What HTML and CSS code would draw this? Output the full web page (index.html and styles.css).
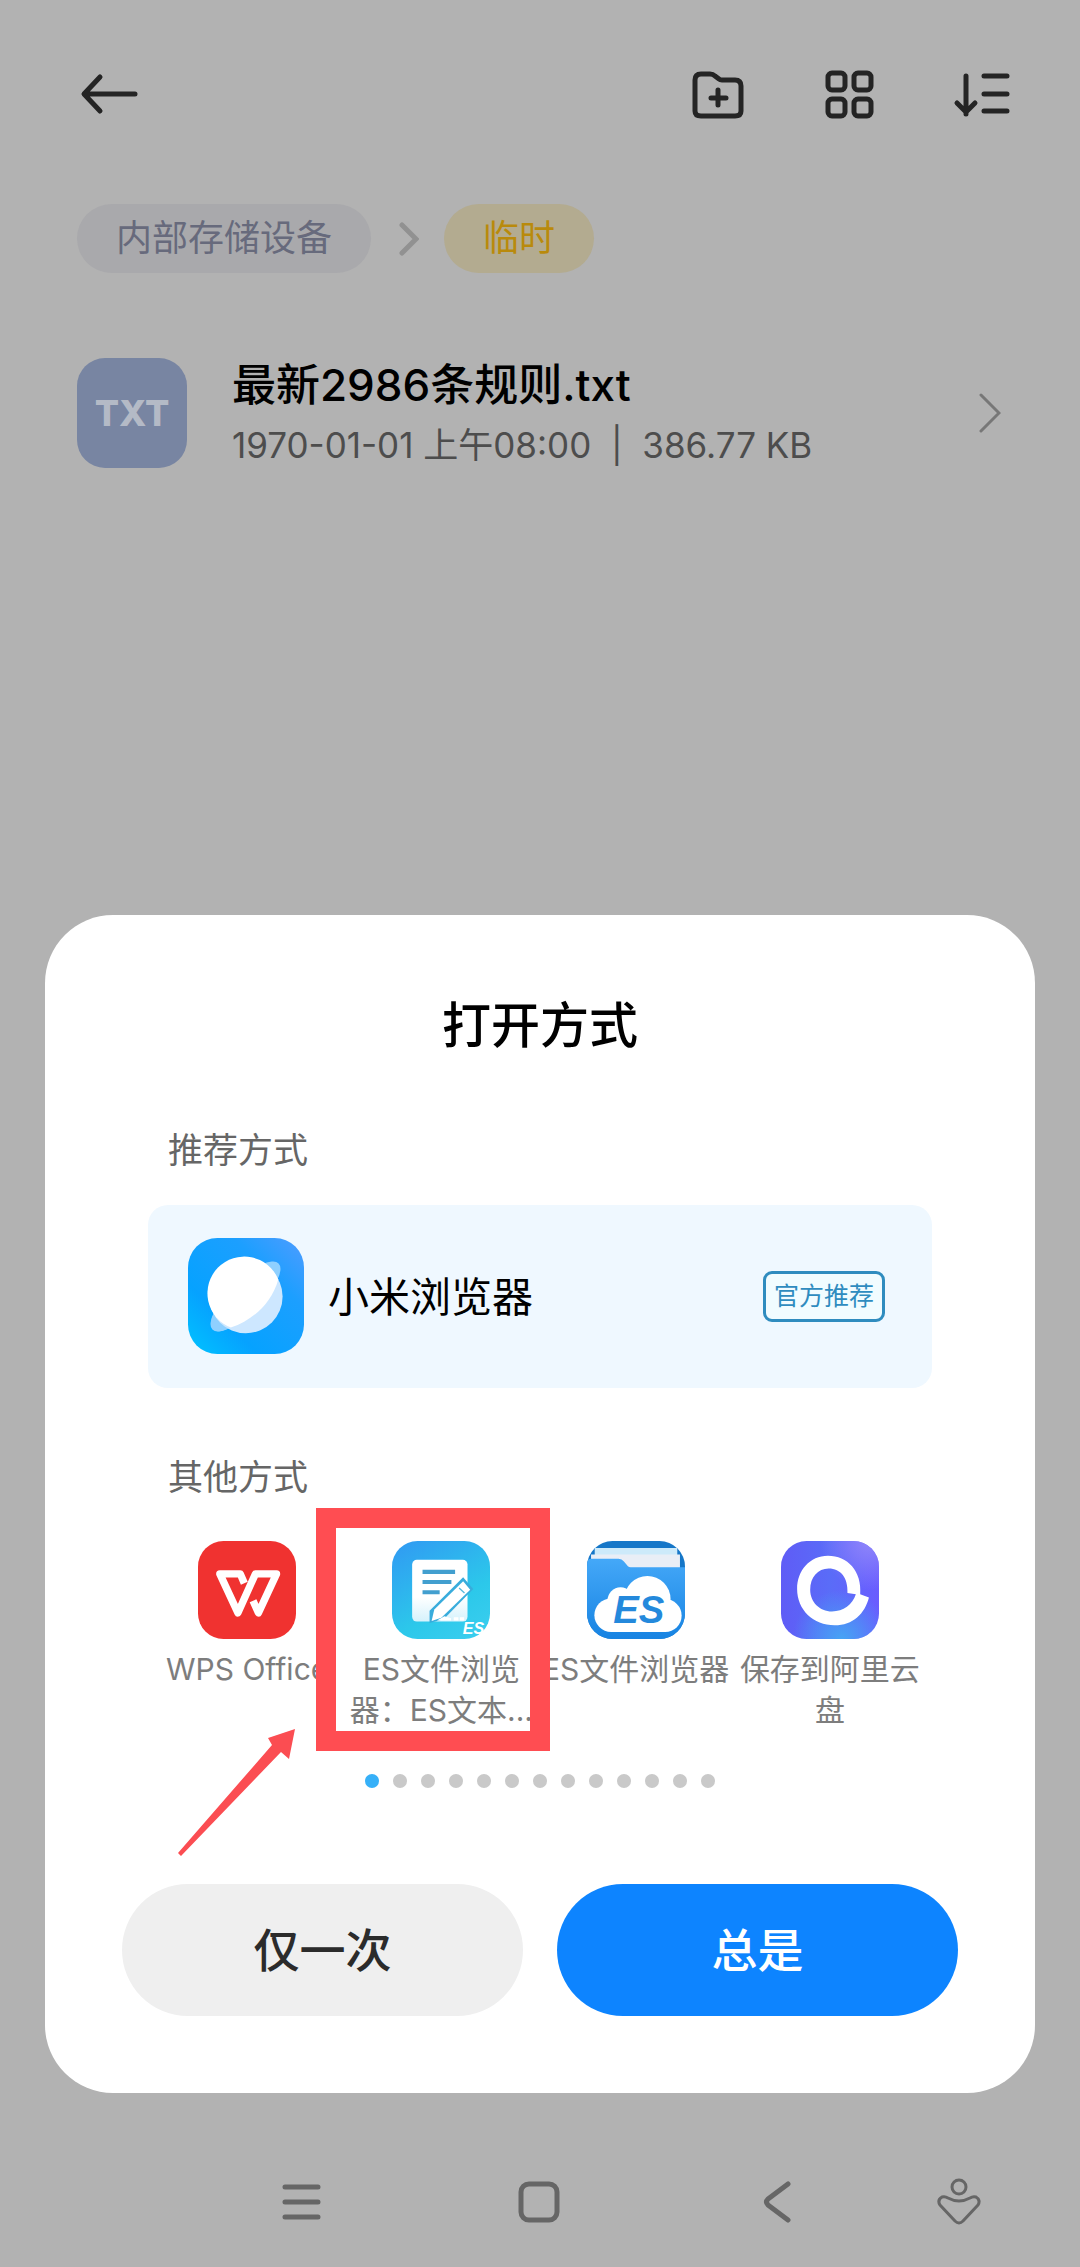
FILE: index.html
```html
<!DOCTYPE html>
<html lang="zh-CN">
<head>
    <meta charset="UTF-8">
    <meta name="viewport" content="width=device-width, initial-scale=1.0">
    <title>打开方式</title>
    <link rel="stylesheet" href="styles.css">
</head>
<body>
    <header class="toolbar">
        <button class="icon-btn back" aria-label="返回">
            <svg viewBox="0 0 60 60"><path d="M55 30H5M20 13L4 30l16 17"/></svg>
        </button>
        <button class="icon-btn" aria-label="新建文件夹">
            <svg viewBox="0 0 60 60"><path d="M13 10h9q3 0 5 2l4 3q1 1 3 1h13q6 0 6 6v25q0 5-6 5H13q-6 0-6-5V16q0-6 6-6zM30 26v15M23 34h15"/></svg>
        </button>
        <button class="icon-btn" aria-label="网格视图">
            <svg viewBox="0 0 60 60">
                <rect x="8" y="9" width="17" height="17" rx="4"/>
                <rect x="34" y="9" width="17" height="17" rx="4"/>
                <rect x="8" y="35" width="17" height="17" rx="4"/>
                <rect x="34" y="35" width="17" height="17" rx="4"/>
            </svg>
        </button>
        <button class="icon-btn" aria-label="排序">
            <svg viewBox="0 0 60 60"><path d="M14 12v38M5 39l9 9 9-9M32 12h23M32 30h23M32 47h23"/></svg>
        </button>
    </header>

    <nav class="breadcrumb">
        <a href="#" class="chip">内部存储设备</a>
        <svg class="crumb-sep" viewBox="0 0 20 34"><path d="M3 3l14 14L3 31"/></svg>
        <a href="#" class="chip current">临时</a>
    </nav>

    <a href="#" class="file">
        <span class="file-icon">TXT</span>
        <span class="file-text">
            <span class="file-name">最新2986条规则.txt</span>
            <span class="file-meta">1970-01-01 上午08:00 &nbsp;|&nbsp; 386.77 KB</span>
        </span>
        <svg class="file-arrow" viewBox="0 0 22 40"><path d="M2 2l18 18L2 38"/></svg>
    </a>

    <main class="sheet">
        <h1>打开方式</h1>

        <div class="options">
            <h2>推荐方式</h2>
            <button class="recommended">
                <svg class="browser-icon" viewBox="0 0 347 347">
                    <defs>
                        <linearGradient id="mi" x1="0" y1="1" x2="1" y2="0">
                            <stop offset="0" stop-color="#00c4ff"/>
                            <stop offset=".3" stop-color="#06a2ff"/>
                            <stop offset=".7" stop-color="#1c9fff"/>
                            <stop offset="1" stop-color="#509cff"/>
                        </linearGradient>
                    </defs>
                    <rect width="347" height="347" rx="88" fill="url(#mi)"/>
                    <ellipse cx="172" cy="175" rx="140" ry="48" transform="rotate(-45 172 175)" fill="#8fd0ff"/>
                    <circle cx="173" cy="175" r="110" fill="#cde7ff"/>
                    <path d="M128 268A110 110 0 1 1 270 124C250 195 195 245 128 268z" fill="#fff"/>
                    <path d="M76 227Q94 262 120 271Q100 282 84 278Q66 270 69 248z" fill="#8fd0ff"/>
                </svg>
                <span class="browser-name">小米浏览器</span>
                <span class="badge">官方推荐</span>
            </button>

            <h2>其他方式</h2>
            <div class="apps">
                <button class="app">
                    <svg viewBox="0 0 292 292">
                        <rect width="292" height="292" rx="76" fill="#f03230"/>
                        <path d="M138 126L126 98H65L119 214 171 98h63L180 214l-16-36" fill="none" stroke="#fff" stroke-width="22" stroke-linejoin="round"/>
                    </svg>
                    <span class="app-name">WPS Office</span>
                </button>
                <button class="app">
                    <svg viewBox="0 0 292 292">
                        <defs>
                            <linearGradient id="edit" x1=".2" y1="0" x2=".8" y2="1">
                                <stop offset="0" stop-color="#309ef2"/>
                                <stop offset=".65" stop-color="#2cc8ea"/>
                                <stop offset="1" stop-color="#38cdee"/>
                            </linearGradient>
                            <linearGradient id="doc" x1="0" y1="0" x2="0" y2="1">
                                <stop offset=".6" stop-color="#fff"/>
                                <stop offset="1" stop-color="#d5f2fc"/>
                            </linearGradient>
                        </defs>
                        <rect width="292" height="292" rx="76" fill="url(#edit)"/>
                        <rect x="60" y="56" width="165" height="184" rx="14" fill="url(#doc)"/>
                        <path d="M91 92h97M91 122h86M91 153h51" stroke="#429fcf" stroke-width="12"/>
                        <path d="M112 244V208L212 108 242 143 154 233z" fill="#38acdc"/>
                        <path d="M118 238l8-34 86-84 21 25-86 84z" fill="#fff"/>
                        <path d="M200 140l16 15" stroke="#55b8dc" stroke-width="4"/>
                        <path d="M134 237l22-13 20 6v7zM184 227h14v10h-14zM202 227h13v10h-13z" fill="#fff"/>
                        <text x="211" y="277" class="logo-small">ES</text>
                    </svg>
                    <span class="app-name">ES文件浏览器：ES文本...</span>
                </button>
                <button class="app">
                    <svg viewBox="0 0 292 292">
                        <defs>
                            <clipPath id="round"><rect width="292" height="292" rx="76"/></clipPath>
                            <linearGradient id="folder" x1="0" y1="0" x2="0" y2="1">
                                <stop offset="0" stop-color="#44a8f8"/>
                                <stop offset="1" stop-color="#1783e2"/>
                            </linearGradient>
                        </defs>
                        <g clip-path="url(#round)">
                            <path d="M0 0h292v292H0z" fill="#1677c8"/>
                            <path d="M23 21h246v60H23z" fill="#cdeafa"/>
                            <path d="M12 40h265v60H12z" fill="#e9eef6"/>
                            <path d="M0 62Q2 53 12 53h82q10 0 16 8l12 14q3 3 8 3h162v214H0z" fill="url(#folder)"/>
                            <g fill="#fff">
                                <circle cx="72" cy="221" r="50"/>
                                <circle cx="100" cy="177" r="39"/>
                                <circle cx="180" cy="173" r="69"/>
                                <circle cx="233" cy="222" r="49"/>
                                <path d="M72 190h161v81H72z"/>
                            </g>
                            <text x="78" y="245" class="logo-large">ES</text>
                        </g>
                    </svg>
                    <span class="app-name">ES文件浏览器</span>
                </button>
                <button class="app">
                    <svg viewBox="0 0 292 292">
                        <defs>
                            <linearGradient id="ali" x1="0" y1="0" x2="1" y2="0">
                                <stop offset="0" stop-color="#5f5cf6"/>
                                <stop offset=".5" stop-color="#5a6cf8"/>
                                <stop offset="1" stop-color="#6a5cff"/>
                            </linearGradient>
                            <radialGradient id="glow" cx=".62" cy="1" r=".5">
                                <stop offset="0" stop-color="#46a4f4"/>
                                <stop offset="1" stop-color="#46a4f4" stop-opacity="0"/>
                            </radialGradient>
                            <radialGradient id="shine" cx=".9" cy="0" r=".5">
                                <stop offset="0" stop-color="#8f86fa"/>
                                <stop offset="1" stop-color="#8f86fa" stop-opacity="0"/>
                            </radialGradient>
                        </defs>
                        <rect width="292" height="292" rx="76" fill="url(#ali)"/>
                        <rect width="292" height="292" rx="76" fill="url(#glow)"/>
                        <rect width="292" height="292" rx="76" fill="url(#shine)"/>
                        <path fill="#fff" fill-rule="evenodd" d="M236 159C242 90 198 44 140 44C86 44 48 88 48 143C48 205 96 251 160 251C214 251 250 216 262 168zM198 155L223 159C213 190 186 210 152 210C115 210 87 181 87 145C87 108 110 82 142 82C178 82 200 110 198 155z"/>
                    </svg>
                    <span class="app-name">保存到阿里云盘</span>
                </button>

                <div class="highlight"></div>
                <svg class="pointer" viewBox="0 0 118 127"><path d="M0 124L94 16 90 9 117 0 111 30 103 23 3 127z"/></svg>
            </div>

            <div class="dots">
                <span class="dot active"></span>
                <span class="dot"></span>
                <span class="dot"></span>
                <span class="dot"></span>
                <span class="dot"></span>
                <span class="dot"></span>
                <span class="dot"></span>
                <span class="dot"></span>
                <span class="dot"></span>
                <span class="dot"></span>
                <span class="dot"></span>
                <span class="dot"></span>
                <span class="dot"></span>
            </div>
        </div>

        <div class="actions">
            <button class="action">仅一次</button>
            <button class="action primary">总是</button>
        </div>
    </main>

    <footer class="system-nav">
        <button class="nav-btn" aria-label="菜单">
            <svg viewBox="0 0 48 48"><path d="M8 9h33M8 24h33M8 39h33" stroke-width="5"/></svg>
        </button>
        <button class="nav-btn" aria-label="主页">
            <svg viewBox="0 0 48 48"><rect x="6" y="6" width="36" height="36" rx="8" stroke-width="5"/></svg>
        </button>
        <button class="nav-btn" aria-label="后退">
            <svg viewBox="0 0 48 48"><path d="M35 6L15 21q-3 3 0 6l20 15" stroke-width="5"/></svg>
        </button>
        <button class="nav-btn assist" aria-label="辅助">
            <svg viewBox="0 0 48 48">
                <circle cx="24" cy="9" r="7" stroke-width="3"/>
                <path d="M7 19Q10 18 13 20Q24 26 35 20Q38 18 41 19Q46 22 43 27L28 43Q24 47 20 43L5 27Q2 22 7 19z" stroke-width="3"/>
            </svg>
        </button>
    </footer>
</body>
</html>
```
FILE: styles.css
```css
* {
    box-sizing: border-box;
}
body {
    font-family: Inter, "Noto Sans CJK SC", sans-serif;
    background-color: #b2b2b2;
    margin: 0;
    min-height: 100vh;
    display: flex;
    flex-direction: column;
}
button {
    font-family: inherit;
    background: none;
    border: none;
    padding: 0;
    color: inherit;
    cursor: pointer;
}
a {
    color: inherit;
    text-decoration: none;
}
svg {
    display: block;
    flex-shrink: 0;
}

/* top bar */
.toolbar {
    display: flex;
    gap: 72px;
    padding: 64px 68px 0 80px;
}
.icon-btn {
    width: 60px;
    height: 60px;
}
.icon-btn svg {
    width: 60px;
    height: 60px;
    fill: none;
    stroke: #242424;
    stroke-width: 5;
    stroke-linecap: round;
    stroke-linejoin: round;
}
.back {
    margin-right: auto;
}

.breadcrumb {
    display: flex;
    align-items: center;
    padding: 0 77px;
    margin-top: 80px;
}
.chip {
    height: 69px;
    line-height: 69px;
    padding: 0 39px;
    border-radius: 35px;
    background-color: #a9a9ac;
    color: #676a7c;
    font-size: 36px;
    font-weight: 400;
}
.chip.current {
    background-color: #b3ab90;
    color: #b98a0c;
}
.crumb-sep {
    width: 20px;
    height: 34px;
    margin: 0 25px 0 28px;
    fill: none;
    stroke: #919191;
    stroke-width: 5;
    stroke-linecap: round;
}

/* file row */
.file {
    display: flex;
    align-items: center;
    gap: 45px;
    padding: 0 79px 0 77px;
    margin-top: 80px;
}
.file-icon {
    width: 110px;
    height: 110px;
    line-height: 110px;
    border-radius: 28px;
    background-color: #7885a2;
    color: #b4bac6;
    font-size: 36px;
    font-weight: 800;
    text-align: center;
}
.file-text {
    flex: 1;
    display: flex;
    flex-direction: column;
}
.file-name {
    font-size: 44px;
    line-height: 64px;
    font-weight: 500;
    color: #000;
}
.file-meta {
    font-size: 35px;
    line-height: 56px;
    color: #4d4d4d;
}
.file-arrow {
    width: 22px;
    height: 40px;
    fill: none;
    stroke: #777;
    stroke-width: 3;
    stroke-linecap: round;
}

/* bottom sheet */
.sheet {
    margin: auto 45px 0;
    padding: 76px 77px 77px;
    border-radius: 68px;
    background-color: #fff;
}
h1 {
    margin: 0;
    font-size: 49px;
    line-height: 70px;
    font-weight: 500;
    text-align: center;
    color: #000;
}
.options {
    padding: 0 26px;
}
h2 {
    margin: 64px 20px 30px;
    font-size: 35px;
    line-height: 50px;
    font-weight: 400;
    color: #666;
}
.recommended {
    display: flex;
    align-items: center;
    width: 100%;
    padding: 33px 47px 34px 40px;
    border-radius: 20px;
    background-color: #eff8ff;
}
.browser-icon {
    width: 116px;
    height: 116px;
}
.browser-name {
    margin-left: 24px;
    padding-bottom: 4px;
    font-size: 41px;
    color: #000;
}
.badge {
    margin-left: auto;
    padding: 0 8px;
    border: 3px solid #2f8cbf;
    border-radius: 9px;
    background-color: #f1fcff;
    font-size: 25px;
    line-height: 45px;
    color: #2f8cbf;
}

.apps {
    position: relative;
    display: grid;
    grid-template-columns: repeat(4, 1fr);
    padding: 9px 5px 0 2px;
}
.app {
    display: flex;
    flex-direction: column;
    align-items: center;
    gap: 10px;
}
.app svg {
    width: 98px;
    height: 98px;
}
.app-name {
    font-size: 30px;
    line-height: 41px;
    color: #7d7d7d;
}
.logo-small,
.logo-large {
    font-family: "Liberation Sans", sans-serif;
    font-weight: bold;
    font-style: italic;
}
.logo-small {
    font-size: 48px;
    fill: #fff;
}
.logo-large {
    font-size: 114px;
    fill: #2489dc;
}

/* red marker over the second app */
.highlight {
    position: absolute;
    top: -24px;
    left: 168px;
    width: 234px;
    height: 243px;
    border: 20px solid #ff4d52;
}
.pointer {
    position: absolute;
    top: 197px;
    left: 30px;
    width: 118px;
    height: 127px;
    fill: #fb4d52;
}

.dots {
    display: flex;
    justify-content: center;
    gap: 14px;
    margin-top: 43px;
}
.dot {
    width: 14px;
    height: 14px;
    border-radius: 50%;
    background-color: #c9c9c9;
}
.dot.active {
    background-color: #36b0f8;
}

.actions {
    display: flex;
    gap: 34px;
    margin-top: 96px;
}
.action {
    flex: 1;
    height: 132px;
    padding-bottom: 6px;
    border-radius: 66px;
    background-color: #efefef;
    color: #2b2b2b;
    font-size: 46px;
    font-weight: 500;
}
.action.primary {
    background-color: #0d84ff;
    color: #fff;
}

/* system navigation */
.system-nav {
    display: flex;
    justify-content: space-between;
    align-items: center;
    height: 174px;
    padding: 43px 97px 0 277px;
}
.nav-btn svg {
    width: 48px;
    height: 48px;
    fill: none;
    stroke: #666;
    stroke-linecap: round;
    stroke-linejoin: round;
}
.assist {
    margin-left: -56px;
}
```
